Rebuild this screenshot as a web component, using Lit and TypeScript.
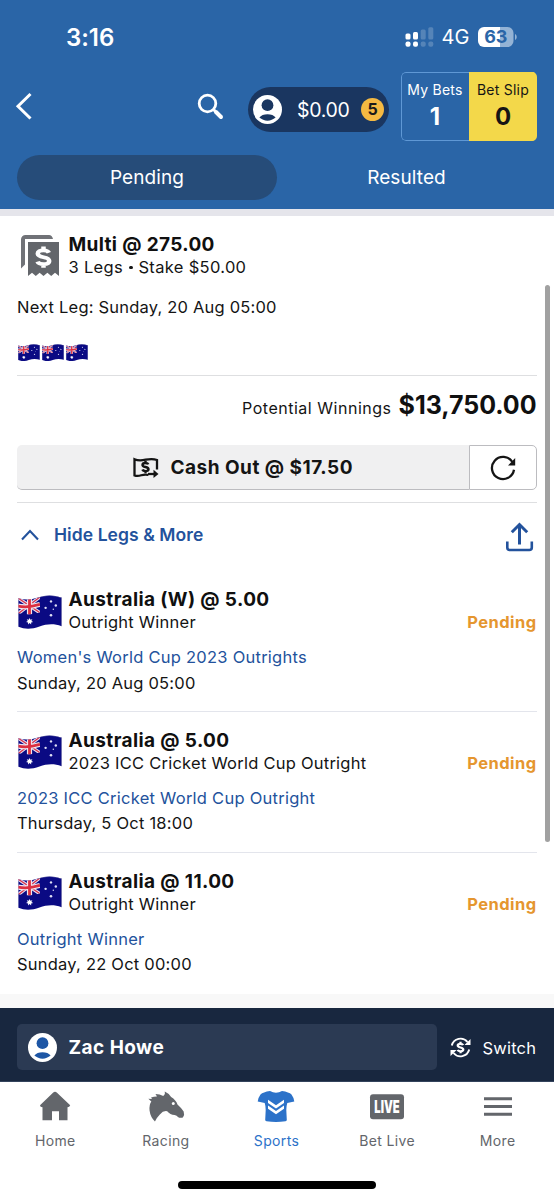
import { LitElement, html, css, svg } from "lit";
import { customElement, property } from "lit/decorators.js";

interface Leg {
  title: string;
  market: string;
  event: string;
  time: string;
}

const legs: Leg[] = [
  { title: "Australia (W) @ 5.00", market: "Outright Winner", event: "Women's World Cup 2023 Outrights", time: "Sunday, 20 Aug 05:00" },
  { title: "Australia @ 5.00", market: "2023 ICC Cricket World Cup Outright", event: "2023 ICC Cricket World Cup Outright", time: "Thursday, 5 Oct 18:00" },
  { title: "Australia @ 11.00", market: "Outright Winner", event: "Outright Winner", time: "Sunday, 22 Oct 00:00" },
];

const dollar = svg`<path d="M3.6 -3.6C3 -5 1.8 -5.5 0 -5.5C-2.3 -5.5 -3.8 -4.6 -3.8 -2.9C-3.8 -1 -2 -0.5 0 0C2.2 0.5 3.8 1.1 3.8 3C3.8 4.7 2.3 5.6 0 5.6C-2 5.6 -3.4 5 -4 3.5M0 -8.5V-5M0 5V8.5" fill="none" stroke="currentColor"/>`;

@customElement("au-flag")
export class AuFlag extends LitElement {
  static styles = css`
    :host { display: block; }
    svg { display: block; width: 100%; height: 100%; }
  `;
  render() {
    return html`<svg viewBox="0 0 44 35" preserveAspectRatio="none">
      <defs>
        <clipPath id="wave"><path d="M.4 3.2C7 5.2 13 5 20 2.6C28 -.2 35 -.2 43.6 2.6V31.6C36 28.9 29 29.3 21.500 31.9C14 34.700 7 35 .4 32.2Z"/></clipPath>
        <clipPath id="jack"><path d="M0 2C8 5.200 14 4.800 22 1.800V17.600C14 20.500 8 20.600 0 18.200Z"/></clipPath>
      </defs>
      <g clip-path="url(#wave)">
        <rect width="44" height="35" fill="#0a0a83"/>
        <g clip-path="url(#jack)">
          <path d="M0 3L22 18M0 19L22 2" stroke="#e3dcf0" stroke-width="3.400"/>
          <path d="M0 3L22 18M0 19L22 2" stroke="#d8324a" stroke-width="1.300"/>
          <path d="M0 11.200C8 13 14 12 22 9.500M11.500 2V20" stroke="#f1e6f0" stroke-width="5.200" fill="none"/>
          <path d="M0 11.200C8 13 14 12 22 9.500M11.500 2V20" stroke="#dc2f40" stroke-width="2.800" fill="none"/>
        </g>
        <path d="M11.6 23.300l.8 1.900 2-.7-1 1.900 1.800 1.100-2.100.3.1 2.100-1.600-1.400-1.500 1.400V27.800l-2.100-.3 1.800-1.100-1-1.900 2 .7z" fill="#fff"/>
        <g fill="#dfe0f5"><circle cx="33" cy="6.500" r="1.200"/><circle cx="27.600" cy="13" r="1.200"/><circle cx="37.800" cy="10.700" r="1.200"/><circle cx="33" cy="20.600" r="1.300"/><circle cx="35.300" cy="14.500" r=".7"/></g>
        <path d="M20 2.600C28 -.2 35 -.2 43.600 2.600V31.600" fill="none" stroke="#7d7ba8" stroke-width=".8"/>
      </g>
    </svg>`;
  }
}

@customElement("bet-leg")
export class BetLeg extends LitElement {
  @property({ attribute: false }) leg!: Leg;
  static styles = css`
    :host { display: block; height: 140.8px; box-sizing: border-box; border-bottom: 1.500px solid #e3e5ec; white-space: nowrap; }
    :host([last]) { border-bottom: 0; }
    .top { display: grid; grid-template-columns: 51.500px 1fr auto; height: 64px; padding-top: 16px; box-sizing: border-box; }
    au-flag { width: 44px; height: 34.500px; margin-top: 7.500px; margin-left: .5px; }
    .title { font-size: 19px; font-weight: 700; line-height: 26px; letter-spacing: .38px; color: #101010; }
    .market { font-size: 16.500px; line-height: 19px; letter-spacing: .24px; }
    .status { align-self: end; padding-bottom: 3px; font-size: 16.500px; font-weight: 700; line-height: 19px; letter-spacing: .42px; color: #e5962f; margin-right: .5px; }
    .event { margin-top: 12px; font-size: 16.500px; line-height: 20px; color: #23529c; letter-spacing: .25px; }
    .time { margin-top: 5.500px; font-size: 16.500px; line-height: 20px; letter-spacing: .22px; }
  `;
  render() {
    return html`<div class="top"><au-flag></au-flag>
        <div><div class="title">${this.leg.title}</div><div class="market">${this.leg.market}</div></div>
        <div class="status">Pending</div>
      </div>
      <div class="event">${this.leg.event}</div>
      <div class="time">${this.leg.time}</div>`;
  }
}

@customElement("app-root")
export class AppRoot extends LitElement {
  static styles = css`
    :host { display: block; position: relative; width: 554px; height: 1200px; overflow: hidden; background: #fff; color: #141414; font-family: Inter, "Liberation Sans", sans-serif; white-space: nowrap; }
    * { box-sizing: border-box; }
    svg { display: block; flex: none; }
    header { height: 209px; background: #2a65a7; color: #fff; }
    .statusbar { display: flex; align-items: center; height: 72px; padding: 2px 37.500px 0 66px; }
    .clock { flex: 1; font-size: 24px; font-weight: 600; letter-spacing: -.05px; }
    .net { margin-left: 8px; font-size: 20px; width: 36px; }
    .battery { font-weight: 700; font-size: 18px; }
    .toolbar { display: flex; align-items: center; height: 69px; padding: 0 17px 0 13.500px; }
    .back { margin-top: -2px; }
    .search { margin: -1px 0 0 163px; }
    .wallet { display: flex; align-items: center; width: 141px; height: 45px; margin: 6px 0 0 24.500px; padding-left: 5px; border-radius: 23px; background: #1a3660; }
    .cash { width: 64px; margin-left: 15px; font-size: 19.500px; letter-spacing: -.3px; }
    .bonus { width: 23px; height: 23px; border-radius: 50%; background: #f5b942; color: #1a1a1a; font-size: 16px; font-weight: 700; line-height: 23px; text-align: center; }
    .slips { display: flex; width: 136px; height: 69px; margin-left: 12px; border-radius: 5px; overflow: hidden; }
    .slip { width: 68px; padding: 8px 1px 0 0; text-align: center; border: 1px solid #5f98d5; border-right: 0; border-radius: 5px 0 0 5px; }
    .slip.yellow { width: 68px; border-color: #f3d84a; background: #f3d84a; color: #151515; border-radius: 0; }
    .sliplabel { font-size: 14px; line-height: 18px; letter-spacing: .25px; }
    .slipcount { margin-top: 4px; font-size: 24px; line-height: 28px; font-weight: 700; }
    .tabs { display: flex; margin: 14px 17px 0; }
    .tab { width: 260px; height: 45px; line-height: 46px; border-radius: 23px; text-align: center; font-size: 19px; letter-spacing: .1px; }
    .tab + .tab { padding-right: 1px; }
    .tab.on { background: #264c79; }
    .stripe { height: 7px; background: #e5e5eb; }
    main { height: 778px; padding: 0 17px; }
    .multi { display: flex; height: 81px; padding-top: 16px; }
    .multiicon { margin: 2px 8.500px 0 3px; color: #fff; }
    .title { font-size: 19px; font-weight: 700; line-height: 26px; letter-spacing: .35px; color: #101010; }
    .sub { font-size: 16.500px; line-height: 19px; letter-spacing: .32px; }
    .dot { display: inline-block; width: 3.500px; height: 3.500px; margin: 0 1px 4px; border-radius: 50%; background: #141414; }
    .next { height: 46px; line-height: 21px; font-size: 16.500px; letter-spacing: .2px; }
    .flags { display: flex; gap: 2.300px; height: 33px; padding: .7px 0 0 .5px; border-bottom: 1px solid #dedfe1; }
    .flags au-flag { width: 22px; height: 17.500px; }
    .win { display: flex; justify-content: flex-end; align-items: flex-start; height: 69px; padding-top: 14px; line-height: 31px; }
    .winlabel { margin: 2.500px 7px 0 0; font-size: 16px; letter-spacing: .52px; }
    .amount { font-size: 25px; font-weight: 700; letter-spacing: -.03px; color: #101010; margin-right: .5px; }
    .cashout { display: flex; height: 45px; }
    .cashbtn { display: flex; align-items: center; justify-content: center; width: 452px; background: #f0f0f1; border-bottom: 1.500px solid #bcbcc0; border-radius: 5px 0 0 5px; font-size: 19px; font-weight: 700; letter-spacing: .48px; gap: 11.500px; }
    .refresh { display: grid; place-items: center; width: 68px; border: 1.500px solid #bcbcc0; border-radius: 0 5px 5px 0; }
    .hide { display: flex; align-items: center; height: 69px; margin-top: 12px; border-top: 1px solid #dedfe1; color: #23529c; }
    .hidetext { flex: 1; margin-left: 15px; margin-top: -6px; font-size: 17.500px; font-weight: 600; letter-spacing: .07px; }
    .hide .chev { margin: -5px 0 0 4px; }
    .hide .share { margin: 0 3.500px 0 0; }
    .gap { height: 14px; background: #f8f8f8; }
    .account { display: flex; align-items: center; height: 74px; padding: 3px 17px 0; background: #18273f; color: #fff; border-bottom: 1px solid #33435c; }
    .user { display: flex; flex: none; align-items: center; width: 420px; height: 46px; margin-top: 2px; padding-left: 11px; border-radius: 5px; background: #2b3a53; color: #1d56a5; }
    .name { margin-left: 11.500px; padding-top: 1px; color: #fff; font-size: 19px; font-weight: 700; letter-spacing: .45px; }
    .switchicon { margin: 2px 0 0 13px; }
    .switch { margin-left: 11.500px; padding-top: 3px; font-size: 16.500px; letter-spacing: .2px; }
    nav { display: grid; grid-template-columns: repeat(5, 110.600px); height: 118px; padding-top: 8px; color: #63666b; }
    .item { display: flex; flex-direction: column; align-items: center; font-size: 14px; letter-spacing: .35px; }
    .item.on { color: #2c72c9; }
    .navlabel { margin-top: 8px; line-height: 20px; }
    .home { position: absolute; left: 178px; top: 1181px; width: 198px; height: 8px; border-radius: 4px; background: #000; }
    .scroll { position: absolute; left: 545px; top: 285px; width: 5px; height: 557px; border-radius: 3px; background: #a1a1a1; }
    .live { font: 900 17px Inter, sans-serif; letter-spacing: 0; }
  `;

  private person(size = 29) {
    return html`<svg width=${size} height=${size} viewBox="0 0 29 29"><circle cx="14.500" cy="14.500" r="14.500" fill="#fff"/><circle cx="14.500" cy="10.200" r="5.900" fill="currentColor"/><path d="M6.400 22.600C9 18 20 18 22.600 22.600C18 26.700 11 26.700 6.400 22.600Z" fill="currentColor"/></svg>`;
  }

  render() {
    return html`
      <header>
        <div class="statusbar">
          <div class="clock">3:16</div>
          <svg width="29" height="20" viewBox="0 0 29 20" fill="#fff"><rect x=".5" y="6.500" width="5" height="6" rx="1.500"/><rect x=".5" y="14.500" width="5" height="5.300" rx="2"/><rect x="8" y="5" width="5" height="7.500" rx="1.500"/><rect x="8" y="14.500" width="5" height="5.300" rx="2"/><g opacity=".2"><rect x="15.700" y="2.500" width="5" height="10" rx="1.500"/><rect x="15.700" y="14.500" width="5" height="5.300" rx="2"/><rect x="23.300" y=".3" width="5" height="12.200" rx="1.500"/><rect x="23.300" y="14.500" width="5" height="5.300" rx="2"/></g></svg>
          <div class="net">4G</div>
          <svg width="39" height="20" viewBox="0 0 39 20"><path d="M6 0H22V20H6A6 6 0 0 1 0 14V6A6 6 0 0 1 6 0Z" fill="#fff"/><path d="M22 0H29.500A6 6 0 0 1 35.500 6V14A6 6 0 0 1 29.500 20H22ZM37 7C39.300 8 39.300 12 37 13Z" fill="#94b3d5"/><text class="battery" x="17.800" y="16.300" text-anchor="middle" fill="#2a65a7">63</text></svg>
        </div>
        <div class="toolbar">
          <svg class="back" width="20" height="28" viewBox="0 0 20 28"><path d="M16.500 2L4 14.200L16.500 26.500" fill="none" stroke="#fff" stroke-width="3"/></svg>
          <svg class="search" width="27" height="27" viewBox="0 0 27 27" fill="none" stroke="#fff"><circle cx="10.500" cy="10.500" r="8.300" stroke-width="2.800"/><path d="M16.500 16.500L18.500 18.500" stroke-width="3"/><path d="M19 19L24 24" stroke-width="4" stroke-linecap="round"/></svg>
          <div class="wallet">
            <svg width="29" height="29" viewBox="0 0 29 29"><circle cx="14.500" cy="14.500" r="14.500" fill="#fff"/><circle cx="14.500" cy="10.200" r="5.900" fill="#1a3660"/><path d="M6.400 22.600C9 18 20 18 22.600 22.600C18 26.700 11 26.700 6.400 22.600Z" fill="#1a3660"/></svg>
            <div class="cash">$0.00</div>
            <div class="bonus">5</div>
          </div>
          <div class="slips">
            <div class="slip"><div class="sliplabel">My Bets</div><div class="slipcount">1</div></div>
            <div class="slip yellow"><div class="sliplabel">Bet Slip</div><div class="slipcount">0</div></div>
          </div>
        </div>
        <div class="tabs"><div class="tab on">Pending</div><div class="tab">Resulted</div></div>
      </header>
      <div class="stripe"></div>
      <main>
        <section class="multi">
          <svg class="multiicon" width="40" height="43" viewBox="0 0 40 43"><path d="M1 34.500V5.500A4.500 4.500 0 0 1 5.500 1H29Q32 1 33 5H5V30.500Z" fill="#707277"/><path d="M8 8H39V42L35 38.800L31.200 42L27.400 38.800L23.500 42L19.600 38.800L15.800 42L12 38.800L8 42Z" fill="#63666b"/><g transform="translate(23.500 23.200) scale(1.500 1.250)" stroke-width="3">${dollar}</g></svg>
          <div><div class="title">Multi @ 275.00</div><div class="sub">3 Legs <span class="dot"></span> Stake $50.00</div></div>
        </section>
        <div class="next">Next Leg: Sunday, 20 Aug 05:00</div>
        <div class="flags"><au-flag></au-flag><au-flag></au-flag><au-flag></au-flag></div>
        <div class="win"><span class="winlabel">Potential Winnings</span><span class="amount">$13,750.00</span></div>
        <div class="cashout">
          <div class="cashbtn"><svg width="26" height="21" viewBox="0 0 26 21" fill="none" stroke="currentColor" stroke-width="2.300"><path d="M15.500 18C9 16 7.500 20.500 1.500 18.500V2.200C10 6 15 -.5 24 3V12.500"/><g transform="translate(12.500 10) scale(.78 .73)" stroke-width="3.200">${dollar}</g><path d="M15 17H22"/><path d="M20.500 12.800L25.500 17L20.500 21Z" fill="currentColor" stroke="none"/></svg><span>Cash Out @ $17.50</span></div>
          <div class="refresh"><svg width="26" height="26" viewBox="0 0 26 26"><path d="M24 14.800A11.100 11.100 0 1 1 22.400 7" fill="none" stroke="#151515" stroke-width="2.300"/><path d="M25.200 3V10.500H18Z" fill="#151515"/></svg></div>
        </div>
        <div class="hide">
          <svg class="chev" width="18" height="12" viewBox="0 0 18 12"><path d="M1 10.500L9 2L17 10.500" fill="none" stroke="currentColor" stroke-width="2.100"/></svg>
          <span class="hidetext">Hide Legs &amp; More</span>
          <svg class="share" width="29" height="30" viewBox="0 0 29 30" fill="none" stroke="currentColor" stroke-width="3"><path d="M14.500 22.500V3M6.800 10.200L14.500 2.500L22.200 10.200"/><path d="M2.300 19.500V25.500Q2.300 28 4.800 28H24.300Q26.800 28 26.800 25.500V19.500" stroke-width="2.600"/></svg>
        </div>
        ${legs.map((leg, i) => html`<bet-leg .leg=${leg} ?last=${i === legs.length - 1}></bet-leg>`)}
      </main>
      <div class="gap"></div>
      <div class="account">
        <div class="user">${this.person()}<span class="name">Zac Howe</span></div>
        <svg class="switchicon" width="21" height="21" viewBox="0 0 21 21" fill="none" stroke="#fff" stroke-width="1.900"><path d="M1.800 8.500A9 9 0 0 1 17.500 5M19.200 12.500A9 9 0 0 1 3.500 16"/><path d="M20.500 2V8H14.500ZM.5 19V13H6.500Z" fill="#fff" stroke="none"/><g transform="translate(10.500 10.500) scale(.72 .67)" stroke-width="3.200">${dollar}</g></svg>
        <span class="switch">Switch</span>
      </div>
      <nav>
        <div class="item"><svg width="36" height="33" viewBox="0 0 36 33" fill="currentColor"><path transform="translate(0 -1.800)" d="M18 3.500Q19 3.500 20 4.500L33.200 17Q32.500 19 30.500 19V32H22V23H15V32H5.500V19Q3 19 3 17L16 4.500Q17 3.500 18 3.500Z"/></svg><span class="navlabel">Home</span></div>
        <div class="item"><svg width="38" height="33" viewBox="0 0 38 33" fill="currentColor"><g transform="translate(.6 -1.600) scale(.98 1)"><path d="M.8 10.300L4.500 10.500L3.500 9.200Q6.500 8 9.500 8Q9 6.500 8 5.500Q12.500 5.500 16 7.500Q18.500 5 17.500 3Q22 5 24 8.500Q29 11.500 30.500 16Q34 19 36.800 23Q38 26 36 29Q33 30 31 28.500Q30 27 27.500 26.500Q23 26.500 20 22.800Q16 22 12.500 26Q9 29.500 7.500 33Q2.800 28.500 2 22Q1.500 16 3.800 13Q2.500 12 .8 10.300Z"/><circle cx="26.200" cy="15" r="1.500" fill="#fff"/></g></svg><span class="navlabel">Racing</span></div>
        <div class="item on"><svg width="38" height="33" viewBox="0 0 38 33" fill="currentColor"><path d="M13 1Q19 4.600 25 1Q32 2 34.500 4.500Q36.500 7 37.300 11.500L30.300 13Q29.300 16 29.300 20L29.800 30Q29.800 30.800 28.500 31.200Q19 32.600 9.500 31.200Q8.200 30.800 8.200 30L8.700 20Q8.700 16 7.700 13L.7 11.500Q1.500 7 3.500 4.500Q6 2 13 1Z"/><path d="M11 9.800L19 15.300L27 9.800V13L19 18.500L11 13ZM11 15.500L19 21L27 15.500V18.700L19 24.200L11 18.700Z" fill="#fff"/></svg><span class="navlabel">Sports</span></div>
        <div class="item"><svg width="36" height="33" viewBox="0 0 36 33"><rect x="1" y="4.200" width="34" height="25" rx="3" fill="currentColor"/><text class="live" transform="translate(18 22.900) scale(.66 1)" text-anchor="middle" fill="#fff">LIVE</text></svg><span class="navlabel">Bet Live</span></div>
        <div class="item"><svg width="36" height="33" viewBox="0 0 36 33"><path d="M4 8.700H32M4 16.500H32M4 24.300H32" stroke="currentColor" stroke-width="2.900"/></svg><span class="navlabel">More</span></div>
      </nav>
      <div class="scroll"></div>
      <div class="home"></div>
    `;
  }
}
